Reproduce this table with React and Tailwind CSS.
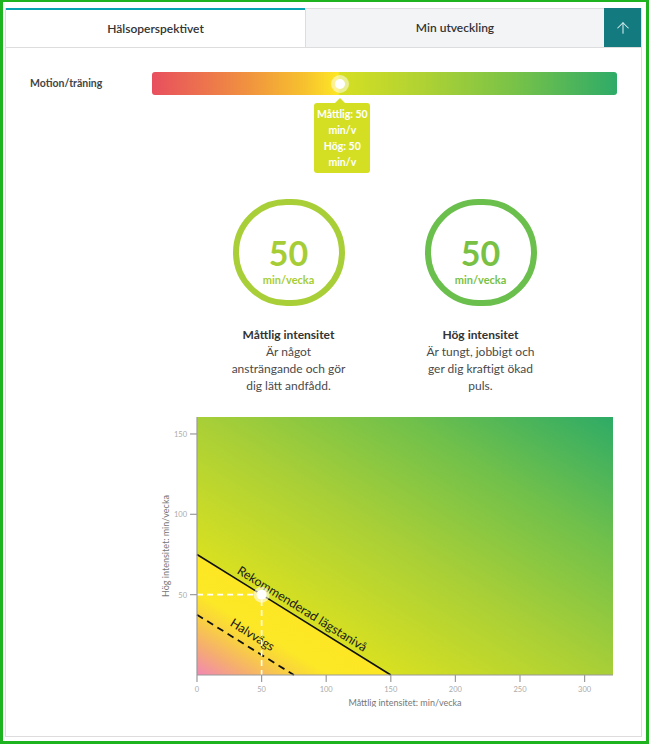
import { ArrowUp } from "lucide-react";

const PLOT = { x0: 45, x1: 461, top: 10, bottom: 268 };
const sx = (v) => PLOT.x0 + v * 1.292;
const sy = (v) => PLOT.bottom - v * 1.607;
const ANGLE = 31.85;

function Chart() {
  const xTicks = [0, 50, 100, 150, 200, 250, 300];
  const yTicks = [50, 100, 150];
  return (
    <svg width="465" height="300" className="block">
      <defs>
        <linearGradient id="bg" gradientUnits="userSpaceOnUse" x1="45" y1="268" x2="276.4" y2="-104.5">
          <stop offset="0" stopColor="#f287b4" />
          <stop offset="0.06" stopColor="#f5ad70" />
          <stop offset="0.12" stopColor="#f9d43c" />
          <stop offset="0.16" stopColor="#fce826" />
          <stop offset="0.232" stopColor="#fde724" />
          <stop offset="0.234" stopColor="#d8e021" />
          <stop offset="0.5" stopColor="#a8cf37" />
          <stop offset="0.75" stopColor="#70c04b" />
          <stop offset="1" stopColor="#2eab66" />
        </linearGradient>
      </defs>
      <rect x={PLOT.x0} y={PLOT.top} width={PLOT.x1 - PLOT.x0} height={PLOT.bottom - PLOT.top} fill="url(#bg)" />

      {/* lines */}
      <line x1={sx(0)} y1={sy(75)} x2={sx(150)} y2={sy(0)} stroke="#111" strokeWidth="1.6" />
      <line x1={sx(0)} y1={sy(37.5)} x2={sx(75)} y2={sy(0)} stroke="#111" strokeWidth="1.8" strokeDasharray="7 5" />
      <g transform={`translate(${sx(0)} ${sy(75)}) rotate(${ANGLE})`}>
        <text x="43" y="-5" fontSize="12.5" fill="#1a1a1a">Rekommenderad lägstanivå</text>
      </g>
      <g transform={`translate(${sx(0)} ${sy(37.5)}) rotate(${ANGLE})`}>
        <text x="33" y="-8" fontSize="12.5" fill="#1a1a1a">Halvvägs</text>
      </g>

      {/* user point */}
      <path d={`M${sx(0)} ${sy(50)} H${sx(50)} V${sy(0)}`} fill="none" stroke="#fff" strokeWidth="1.6" strokeDasharray="6 4" />
      <circle cx={sx(50)} cy={sy(50)} r="8" fill="#fff" fillOpacity="0.55" />
      <circle cx={sx(50)} cy={sy(50)} r="5" fill="#fff" />

      {/* axes */}
      <line x1={PLOT.x0} y1={PLOT.top} x2={PLOT.x0} y2={PLOT.bottom} stroke="#9a9a9a" strokeWidth="1.2" />
      <line x1={PLOT.x0} y1={PLOT.bottom} x2={PLOT.x1} y2={PLOT.bottom} stroke="#9a9a9a" strokeWidth="1.2" />
      {yTicks.map((v) => (
        <g key={v}>
          <line x1={PLOT.x0 - 7} y1={sy(v)} x2={PLOT.x0} y2={sy(v)} stroke="#9a9a9a" strokeWidth="1.2" />
          <text x={PLOT.x0 - 10} y={sy(v) + 3} fontSize="7.5" fill="#aaa" textAnchor="end">{v}</text>
        </g>
      ))}
      {xTicks.map((v) => (
        <g key={v}>
          <line x1={sx(v)} y1={PLOT.bottom} x2={sx(v)} y2={PLOT.bottom + 7} stroke="#9a9a9a" strokeWidth="1.2" />
          <text x={sx(v)} y={PLOT.bottom + 17} fontSize="7.5" fill="#aaa" textAnchor="middle">{v}</text>
        </g>
      ))}
      <text x="253" y="299" fontSize="9" fill="#777" textAnchor="middle">Måttlig intensitet: min/vecka</text>
      <text transform="translate(17 139) rotate(-90)" fontSize="9" fill="#777" textAnchor="middle">Hög intensitet: min/vecka</text>
    </svg>
  );
}

function Ring({ color, title, lines }) {
  return (
    <div className="w-[130px] flex flex-col items-center">
      <div
        className={`w-[112px] h-[107px] rounded-full border-[6px] flex flex-col items-center justify-center ${color}`}
      >
        <span className="text-[34px] font-bold leading-none mt-[19px]">50</span>
        <span className="text-[11px] font-bold mt-[2px]">min/vecka</span>
      </div>
      <div className="mt-[20px] text-center text-[12px] leading-[17px] text-[#4a4a4a]">
        <div className="font-bold text-[#333]">{title}</div>
        {lines.map((l) => (
          <div key={l}>{l}</div>
        ))}
      </div>
    </div>
  );
}

export default function App() {
  return (
    <div className="h-[744px] border-[3px] border-t-2 border-[#1db41f] bg-white pt-[6px] pl-[2px] pr-[4px] pb-[4px] font-['Lato',sans-serif]">
      <div className="h-full border-x border-b border-[#dddddd] flex flex-col">
        {/* tabs */}
        <div className="flex h-[40px] border-b border-[#dddddd]">
          <div className="w-[299px] border-t-2 border-[#07a3b3] flex items-center justify-center text-[12px] font-semibold text-[#333]">
            Hälsoperspektivet
          </div>
          <div className="flex-1 bg-[#f3f4f6] border-l border-t border-[#dddddd] flex items-center justify-center text-[12px] font-semibold text-[#333]">
            Min utveckling
          </div>
          <button className="w-[37px] bg-[#137a80] flex items-center justify-center text-[#d9eef0]">
            <ArrowUp size={18} strokeWidth={1.4} />
          </button>
        </div>

        <div className="px-6 pt-6">
          {/* slider row */}
          <div className="flex items-center">
            <div className="w-[122px] text-[10.5px] font-bold text-[#444]">Motion/träning</div>
            <div className="relative flex-1 h-[23px] rounded-[3px] bg-[linear-gradient(to_right,#e84f5e_0%,#f09040_20%,#f7c22e_33%,#fde725_40%,#d6df22_40.5%,#b0d233_58%,#78c248_78%,#2eab68_100%)]">
              <div className="absolute left-[40.5%] top-1/2 -translate-x-1/2 -translate-y-1/2 w-[18px] h-[18px] rounded-full bg-white/50 flex items-center justify-center">
                <div className="w-[10px] h-[10px] rounded-full bg-white" />
              </div>
              <div className="absolute left-[40.5%] top-[26px] -translate-x-1/2 flex flex-col items-center">
                <div className="w-0 h-0 border-x-[5px] border-x-transparent border-b-[5px] border-b-[#d4df24]" />
                <div className="w-[56px] rounded-[3px] bg-[#d4df24] py-[3px] text-center text-[10.5px] leading-[16px] font-bold text-white ml-[4px]">
                  Måttlig: 50
                  <br />
                  min/v
                  <br />
                  Hög: 50
                  <br />
                  min/v
                </div>
              </div>
            </div>
          </div>

          {/* rings */}
          <div className="ml-[122px] mt-[104px] flex justify-center gap-[62px]">
            <Ring
              color="border-[#a9cf38] text-[#a6cd36]"
              title="Måttlig intensitet"
              lines={["Är något", "ansträngande och gör", "dig lätt andfådd."]}
            />
            <Ring
              color="border-[#6bbf4c] text-[#79c144]"
              title="Hög intensitet"
              lines={["Är tungt, jobbigt och", "ger dig kraftigt ökad", "puls."]}
            />
          </div>

          {/* chart */}
          <div className="ml-[122px] mt-[13px]">
            <Chart />
          </div>
        </div>
      </div>
    </div>
  );
}
